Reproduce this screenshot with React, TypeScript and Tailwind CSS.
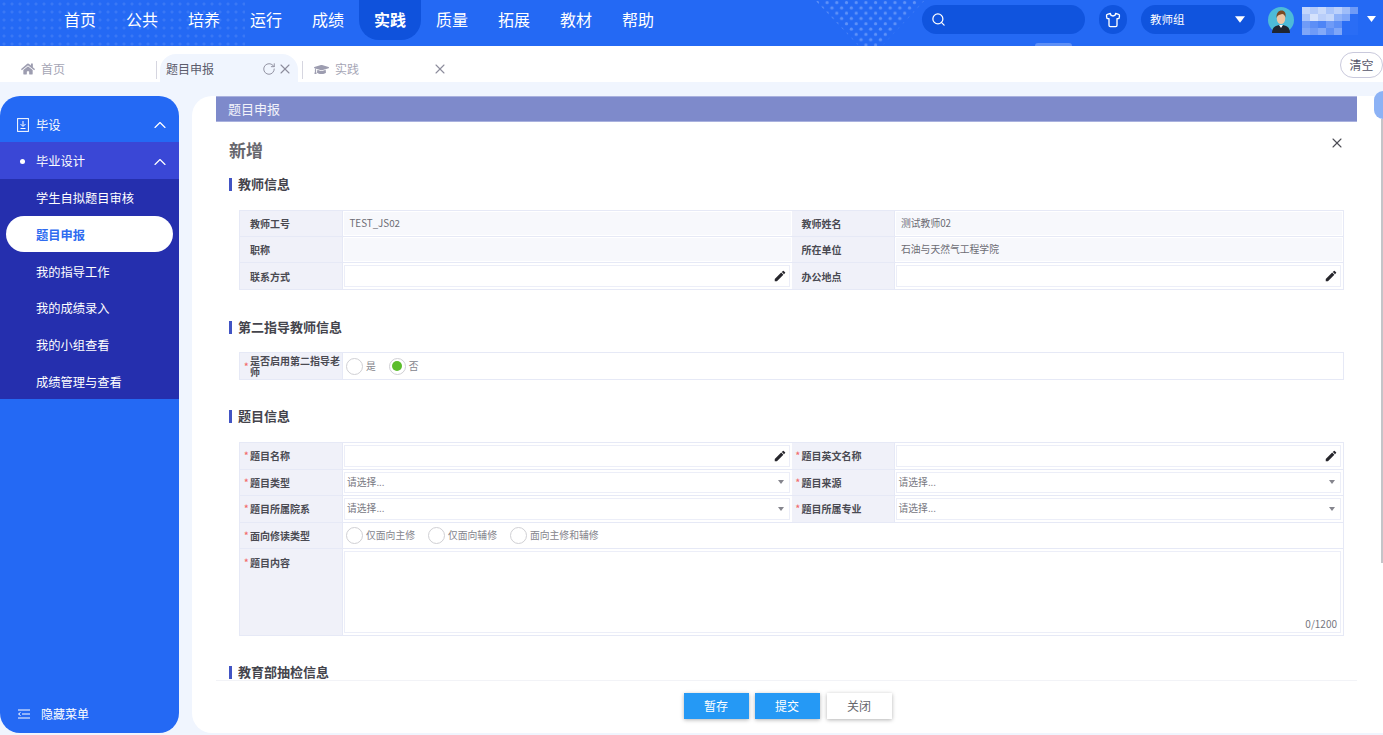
import { ChevronUp, RotateCw, Search, Shirt, X } from "lucide-react"
import { FaGraduationCap, FaHome } from "react-icons/fa"
import { MdEdit } from "react-icons/md"

const navItems = ["首页", "公共", "培养", "运行", "成绩", "实践", "质量", "拓展", "教材", "帮助"]
const subItems = ["学生自拟题目审核", "题目申报", "我的指导工作", "我的成绩录入", "我的小组查看", "成绩管理与查看"]

const mosaic = [
  "#c3d6fb", "#b4cbfa", "#c9dafb", "#a9c4fa", "#bcd1fb", "#9fbdf9", "#6f9bf7",
  "#a9c4fa", "#d5e2fc", "#b9cefa", "#c3d6fb", "#8fb2f8", "#7ea6f8", "#2a6df5",
  "#6f9bf7", "#5d8ff6", "#4e85f6", "#6f9bf7", "#5d8ff6", "#2a6df5", "#2a6df5",
  "#7ea6f8", "#6f9bf7", "#82a9f8", "#5d8ff6", "#7ea6f8", "#2a6df5", "#2a6df5",
]

function Caret({ className }: { className: string }) {
  return (
    <svg viewBox="0 0 12 8" className={className} fill="currentColor">
      <path d="M0 0h12L6 8z" />
    </svg>
  )
}

function Avatar() {
  return (
    <svg viewBox="0 0 26 26" className="h-[26px] w-[26px] shrink-0">
      <circle cx="13" cy="13" r="13" fill="#4dbbd8" />
      <path d="M4 26c0-6 4-8 9-8s9 2 9 8z" fill="#1f2530" />
      <path d="M11 18l2 3 2-3z" fill="#fff" />
      <ellipse cx="13" cy="11.5" rx="4.2" ry="5.6" fill="#eec6a4" />
      <path d="M8.6 11c-.6-5 2-7.5 5-7.5 2.8 0 4.6 2 3.9 7-.6-2-1.600-3.500-3.400-3.500-2 .8-4.600.6-5.500 4z" fill="#7a4a24" />
    </svg>
  )
}

function Header() {
  return (
    <header className="relative flex h-[46px] shrink-0 items-start bg-[#2469f4] pl-[49px] text-white">
      <div className="absolute left-0 top-0 h-[46px] w-[245px] bg-[radial-gradient(circle,#5a8ef7_1.4px,transparent_1.7px)] bg-[length:8px_8px] opacity-40" />
      <svg className="absolute left-[815px] top-0 h-[46px] w-[110px]" viewBox="0 0 110 46">
        <defs>
          <pattern id="dots" width="9.7" height="10.6" patternUnits="userSpaceOnUse">
            <circle cx="2.4" cy="2.6" r="1.6" fill="#5f92f8" />
            <circle cx="7.25" cy="7.9" r="1.6" fill="#5f92f8" />
          </pattern>
        </defs>
        <path d="M0 0h110L67 46H44z" fill="url(#dots)" />
      </svg>
      <nav className="relative flex">
        {navItems.map((item) => (
          <a
            key={item}
            className={`flex h-10 w-[62px] items-center justify-center pb-[2px] text-base ${
              item === "实践" ? "rounded-b-[20px] bg-[#0f52dc] font-bold" : ""
            }`}
          >
            {item}
          </a>
        ))}
      </nav>
      <div className="relative ml-[253px] mt-[5px] flex h-[29px] w-[163px] items-center rounded-full bg-[#1054de] pl-[9px]">
        <Search className="h-[15px] w-[15px]" />
      </div>
      <div className="relative ml-[14px] mt-[5px] flex h-[29px] w-[28px] items-center justify-center rounded-full bg-[#1054de]">
        <Shirt className="h-4 w-4" />
      </div>
      <div className="relative ml-[14px] mt-[5px] flex h-[29px] w-[114px] items-center justify-between rounded-full bg-[#1054de] pl-[9px] pr-[10px] text-[11.500px]">
        教师组
        <Caret className="h-[7px] w-[10px]" />
      </div>
      <div className="relative ml-[13px] mt-[7px] flex items-start">
        <Avatar />
        <div className="ml-2 grid w-[56px] grid-cols-7">
          {mosaic.map((color, i) => (
            <span key={i} className="h-[7px] w-2" style={{ background: color }} />
          ))}
        </div>
        <Caret className="ml-[9px] mt-[9px] h-[6px] w-[9px]" />
      </div>
      <div className="absolute bottom-0 left-[1035px] h-[3px] w-[37px] rounded-t-md bg-[#5d8ff6]" />
    </header>
  )
}

function Tabs() {
  return (
    <div className="flex h-9 shrink-0 items-end whitespace-nowrap bg-white text-[12px] text-[#a5a5b5]">
      <div className="flex h-7 w-[155px] items-center pl-[21px] pt-[2px]">
        <FaHome className="h-[14px] w-[14px] shrink-0 text-[#9d9db0]" />
        <span className="ml-[6px]">首页</span>
      </div>
      <span className="mb-[3px] ml-px h-[18px] w-px bg-[#d6d6e0]" />
      <div className="ml-[3px] flex h-7 w-[138px] items-center rounded-t-[16px] bg-[#f0f5fe] pl-[6px] pt-[2px] text-[#5c5c6c]">
        <span>题目申报</span>
        <RotateCw className="ml-[48px] h-[14px] w-[14px] shrink-0 text-[#8c8c9c]" strokeWidth={1.6} />
        <X className="ml-px h-4 w-4 shrink-0 text-[#8c8c9c]" strokeWidth={1.6} />
      </div>
      <span className="mb-[3px] ml-[4px] h-[18px] w-px bg-[#d6d6e0]" />
      <div className="flex h-7 w-[150px] items-center pl-[11px] pt-[2px]">
        <FaGraduationCap className="h-[15px] w-[15px] shrink-0 text-[#9d9db0]" />
        <span className="ml-[6px]">实践</span>
        <X className="ml-[73px] h-4 w-4 shrink-0 text-[#8c8c9c]" strokeWidth={1.6} />
      </div>
      <button className="mb-[4px] ml-auto flex h-[26px] w-[43px] items-center justify-center rounded-l-full rounded-r-full border border-[#c9c9dc] text-[12px] text-[#55556a]">
        清空
      </button>
    </div>
  )
}

function Sidebar() {
  return (
    <aside className="flex h-[637px] w-[179px] shrink-0 flex-col overflow-hidden rounded-[20px] bg-[#2469f4] text-[12.250px] text-white">
      <div className="mt-[10px] flex h-[36px] items-center justify-between pl-[17px] pr-[9px] pt-[2px]">
        <span className="flex items-center">
          <svg viewBox="0 0 12 14" className="mr-[7px] h-[14px] w-[12px]" fill="none" stroke="currentColor">
            <rect x="0.6" y="0.6" width="10.800" height="12.800" />
            <path d="M6 3v5M3.500 6L6 8.500 8.500 6M3.500 10.500h5" />
          </svg>
          毕设
        </span>
        <ChevronUp className="h-5 w-5" strokeWidth={1.4} />
      </div>
      <div className="flex h-[37px] items-center justify-between bg-[#3a47d6] pl-[20px] pr-[9px] pt-[2px]">
        <span className="flex items-center">
          <span className="mr-[11px] h-[5px] w-[5px] rounded-full bg-white" />
          毕业设计
        </span>
        <ChevronUp className="h-5 w-5" strokeWidth={1.4} />
      </div>
      <ul className="bg-[#252fae]">
        {subItems.map((item) => (
          <li key={item} className="flex h-[36.700px] items-center">
            {item === "题目申报" ? (
              <span className="ml-[6px] flex h-[36px] w-[167px] items-center rounded-full bg-white pl-[30px] pt-[2px] font-bold text-[#2f6cf0]">
                {item}
              </span>
            ) : (
              <span className="pl-[36px] pt-[2px]">{item}</span>
            )}
          </li>
        ))}
      </ul>
      <div className="mb-[10px] mt-auto flex items-center pl-[18px] text-[12px]">
        <svg viewBox="0 0 12 10" className="mr-[11px] h-[10px] w-3" fill="none" stroke="currentColor">
          <path d="M0 1h12M4 5h8M0 9h12M2.500 3.500L0.500 5l2 1.500" />
        </svg>
        隐藏菜单
      </div>
    </aside>
  )
}

function SectionTitle({ children }: { children: string }) {
  return (
    <h3 className="flex h-5 items-center text-[13px] font-bold text-[#44444c]">
      <span className="mr-[6px] h-[13px] w-[3px] bg-[#4254c4]" />
      {children}
    </h3>
  )
}

function Label({ children, required, className = "" }: { children: string; required?: boolean; className?: string }) {
  return (
    <div className={`flex w-[103px] shrink-0 items-center border-r border-[#e6e9f6] bg-[#f0f1f9] pl-[4px] pr-[2px] text-[10px] font-bold leading-[11px] text-[#4a4a52] ${className}`}>
      <span className={`mr-[2px] w-[4px] shrink-0 text-[9px] text-[#f26d6d] ${required ? "" : "invisible"}`}>*</span>
      <span>{children}</span>
    </div>
  )
}

function ReadOnly({ children }: { children?: string }) {
  return (
    <div className="m-px flex min-w-0 flex-1 items-center bg-[#f7f8fc] pl-[5.500px] text-[9.800px] text-[#6c6c74]">
      {children}
    </div>
  )
}

function TextInput() {
  return (
    <div className="my-[2px] ml-px mr-[2px] flex min-w-0 flex-1 items-center justify-end border border-[#eceef8] bg-white pr-[2px]">
      <MdEdit className="h-[14px] w-[14px] text-[#26262c]" />
    </div>
  )
}

function SelectInput() {
  return (
    <div className="my-[2px] ml-px mr-[2px] flex min-w-0 flex-1 items-center justify-between border border-[#eceef8] bg-white pl-[2px] pr-[4px] text-[9.800px] text-[#77777f]">
      请选择...
      <Caret className="h-[4px] w-[8px] text-[#85858d]" />
    </div>
  )
}

function Radio({ label, checked }: { label: string; checked?: boolean }) {
  return (
    <span className="mr-[13px] flex items-center text-[9.800px] text-[#85858d]">
      <span className="mr-[3px] flex h-[17px] w-[17px] items-center justify-center rounded-full border border-[#d0d0d4] bg-white">
        {checked && <span className="h-[10px] w-[10px] rounded-full bg-[#5bbd2b]" />}
      </span>
      {label}
    </span>
  )
}

function Row({ children, className = "h-[26px]" }: { children: React.ReactNode; className?: string }) {
  return <div className={`flex border-b border-[#e6e9f6] last:border-b-0 ${className}`}>{children}</div>
}

function Table({ children, className = "mt-[16px]" }: { children: React.ReactNode; className?: string }) {
  return <div className={`ml-[10px] w-[1105px] border border-[#e6e9f6] ${className}`}>{children}</div>
}

function Form() {
  return (
    <div className="min-h-0 flex-1 overflow-hidden pl-[13px]">
      <div className="relative pt-[14px]">
        <h2 className="h-[28px] text-[17px] font-bold leading-[28px] text-[#66666c]">新增</h2>
        <X className="absolute left-[1099.500px] top-[13px] h-4 w-4 text-[#4c4c54]" strokeWidth={1.6} />
        <div className="mt-[10px]">
          <SectionTitle>教师信息</SectionTitle>
        </div>
        <Table>
          <Row>
            <Label>教师工号</Label>
            <ReadOnly>TEST_JS02</ReadOnly>
            <Label>教师姓名</Label>
            <ReadOnly>测试教师02</ReadOnly>
          </Row>
          <Row>
            <Label>职称</Label>
            <ReadOnly />
            <Label>所在单位</Label>
            <ReadOnly>石油与天然气工程学院</ReadOnly>
          </Row>
          <Row>
            <Label>联系方式</Label>
            <TextInput />
            <Label>办公地点</Label>
            <TextInput />
          </Row>
        </Table>

        <div className="mt-[27px]">
          <SectionTitle>第二指导教师信息</SectionTitle>
        </div>
        <Table className="mt-[15px]">
          <Row>
            <Label required>是否启用第二指导老师</Label>
            <div className="flex flex-1 items-center pl-[3px]">
              <Radio label="是" />
              <Radio label="否" checked />
            </div>
          </Row>
        </Table>

        <div className="mt-[26px]">
          <SectionTitle>题目信息</SectionTitle>
        </div>
        <Table>
          <Row className="h-[26.500px]">
            <Label required>题目名称</Label>
            <TextInput />
            <Label required>题目英文名称</Label>
            <TextInput />
          </Row>
          <Row className="h-[26.500px]">
            <Label required>题目类型</Label>
            <SelectInput />
            <Label required>题目来源</Label>
            <SelectInput />
          </Row>
          <Row className="h-[26.500px]">
            <Label required>题目所属院系</Label>
            <SelectInput />
            <Label required>题目所属专业</Label>
            <SelectInput />
          </Row>
          <Row className="h-[26.500px]">
            <Label required>面向修读类型</Label>
            <div className="flex flex-1 items-center pl-[3px]">
              <Radio label="仅面向主修" />
              <Radio label="仅面向辅修" />
              <Radio label="面向主修和辅修" />
            </div>
          </Row>
          <Row className="h-[86px]">
            <Label required className="items-start pt-[8px]">题目内容</Label>
            <div className="relative my-[2px] ml-px mr-[2px] flex-1 border border-[#eceef8] bg-white">
              <span className="absolute bottom-px right-[3px] text-[10px] text-[#77777f]">0/1200</span>
            </div>
          </Row>
        </Table>

        <div className="mt-[26px]">
          <SectionTitle>教育部抽检信息</SectionTitle>
        </div>
      </div>
    </div>
  )
}

function Main() {
  return (
    <main className="relative ml-[13px] flex h-[637px] min-w-0 flex-1 flex-col rounded-l-[20px] bg-white">
      <div className="ml-[24px] mr-[26px] flex h-[26px] shrink-0 items-center border-y border-[#a9b1de] bg-[#7e8acb] pl-[12px] text-[13px] text-white/90">
        题目申报
      </div>
      <div className="ml-[24px] flex min-h-0 flex-1 flex-col pr-[26px]">
        <Form />
        <div className="flex h-[53px] shrink-0 items-start justify-center gap-[6px] border-t border-[#f2f3f7] pl-[2px] pt-[12px] text-[12px]">
          <button className="h-[26px] w-[65px] bg-[#2599f5] text-white shadow-[0_1px_4px_rgba(0,0,0,0.3)]">暂存</button>
          <button className="h-[26px] w-[65px] bg-[#2599f5] text-white shadow-[0_1px_4px_rgba(0,0,0,0.3)]">提交</button>
          <button className="ml-px h-[26px] w-[65px] bg-white text-[#66666c] shadow-[0_1px_4px_rgba(0,0,0,0.3)]">关闭</button>
        </div>
      </div>
      <div className="absolute right-0 top-[23px] h-[444px] w-[2px] bg-[#c4c4c8]" />
      <div className="absolute -top-[5px] right-0 h-[28px] w-[9px] rounded-l-full bg-[#8cb2f5]" />
    </main>
  )
}

export default function App() {
  return (
    <div className="flex h-[735px] flex-col overflow-hidden bg-[#f0f5fe] font-['Noto_Sans_CJK_SC','Noto_Sans',sans-serif]">
      <Header />
      <Tabs />
      <div className="mt-[14px] flex min-h-0 flex-1">
        <Sidebar />
        <Main />
      </div>
    </div>
  )
}
